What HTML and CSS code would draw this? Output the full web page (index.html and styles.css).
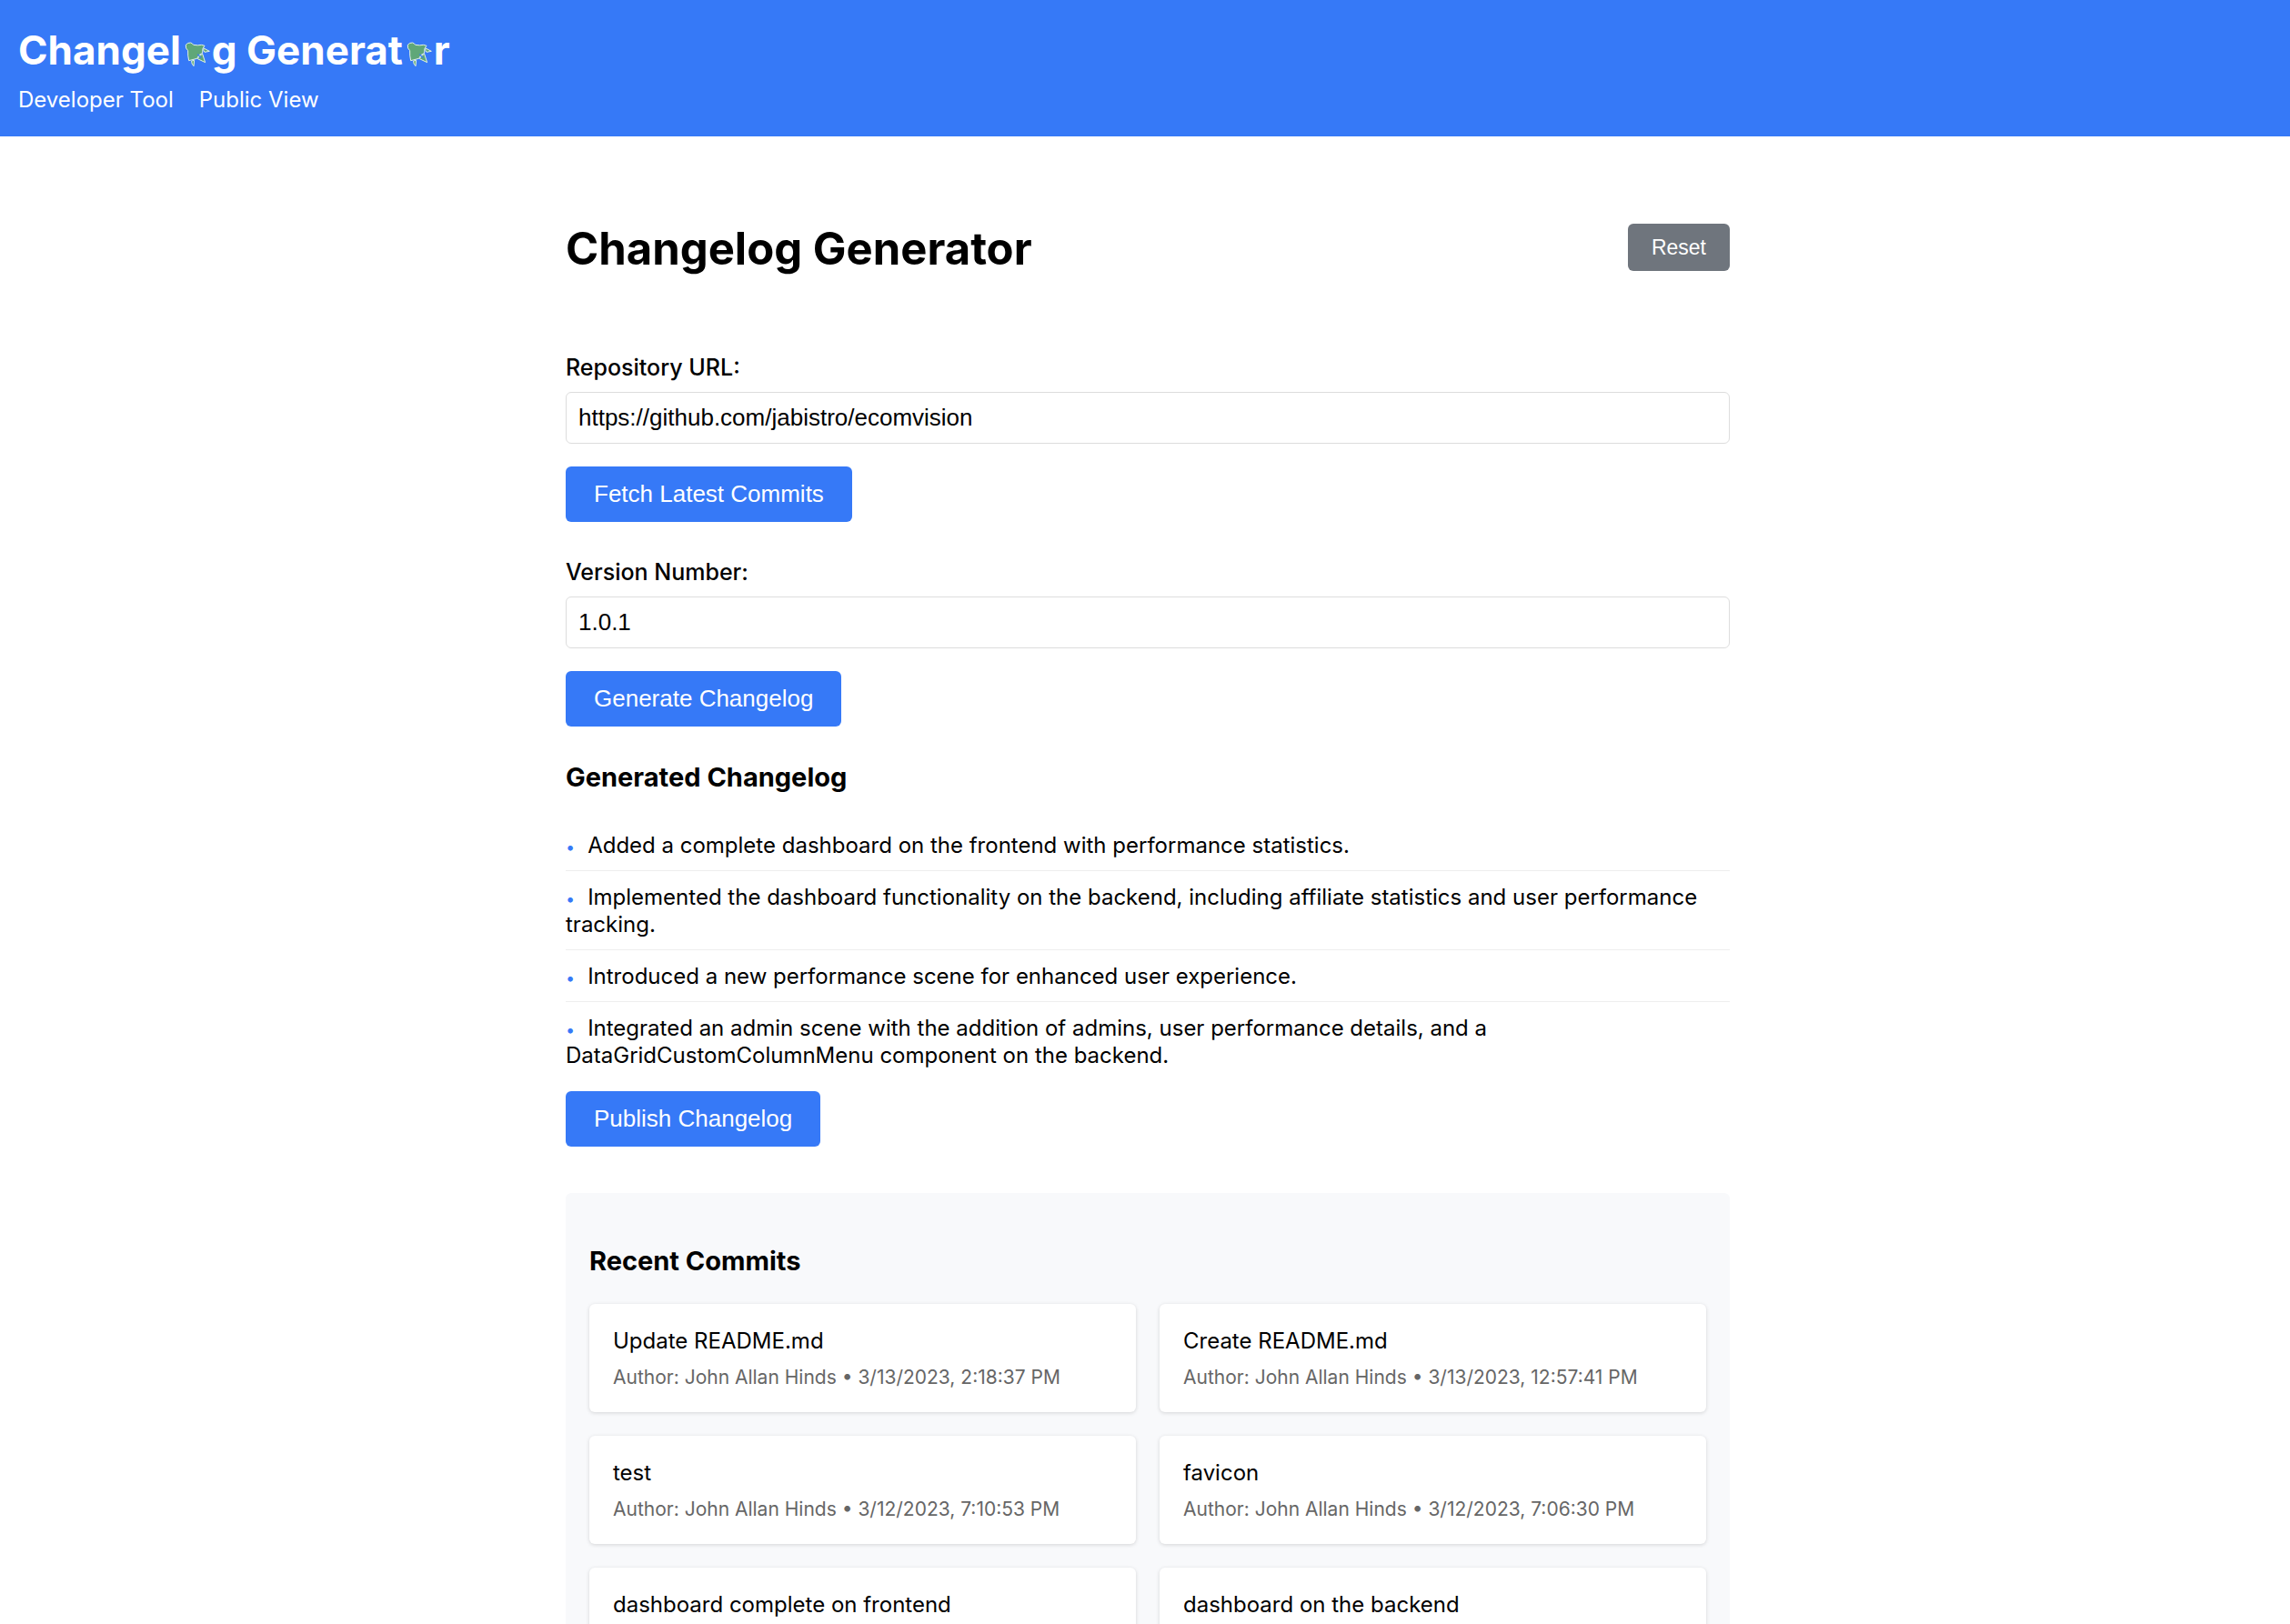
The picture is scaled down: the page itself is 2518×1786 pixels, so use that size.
FILE: index.html
```html
<!DOCTYPE html>
<html lang="en">
<head>
<meta charset="utf-8">
<meta name="viewport" content="width=device-width, initial-scale=1">
<title>Changelog Generator</title>
<link rel="stylesheet" href="styles.css">
</head>
<body>
<svg class="sprite" aria-hidden="true">
  <symbol id="rocket" viewBox="0 0 84 84">
    <g fill="#5fa778" stroke="#e3f2e4" stroke-width="3" stroke-linejoin="round">
      <path d="M4 10Q10 2 20 3Q26 5 29 10Q44 13 56 10L66 13Q57 20 59 37Q46 41 41 55L14 62Q10 46 11 29Q2 22 4 10Z"/>
      <path d="M63 21L82 31L66 34Q60 28 63 21Z"/>
      <path d="M54 43L59 40L68 68L43 56Q48 46 54 43Z"/>
      <path d="M23 63L32 61L30 80Q22 73 23 63Z"/>
    </g>
    <path d="M43 41L54 53" fill="none" stroke="#3679f7" stroke-width="4"/>
  </symbol>
</svg>

<header class="site-header">
  <div class="brand">Changel<svg class="rocket" role="img" aria-label="o"><use href="#rocket"/></svg>g Generat<svg class="rocket" role="img" aria-label="o"><use href="#rocket"/></svg>r</div>
  <nav class="nav">
    <a href="#developer">Developer Tool</a>
    <a href="#public">Public View</a>
  </nav>
</header>

<main class="container">
  <div class="page-head">
    <h1>Changelog Generator</h1>
    <button type="button" class="btn btn-reset">Reset</button>
  </div>

  <form class="form">
    <div class="field">
      <label for="repo">Repository URL:</label>
      <input id="repo" type="text" value="https://github.com/jabistro/ecomvision">
      <button type="button" class="btn">Fetch Latest Commits</button>
    </div>
    <div class="field">
      <label for="version">Version Number:</label>
      <input id="version" type="text" value="1.0.1">
      <button type="button" class="btn">Generate Changelog</button>
    </div>
  </form>

  <section class="changelog">
    <h2>Generated Changelog</h2>
    <ul class="entries">
      <li>Added a complete dashboard on the frontend with performance statistics.</li>
      <li>Implemented the dashboard functionality on the backend, including affiliate statistics and user performance tracking.</li>
      <li>Introduced a new performance scene for enhanced user experience.</li>
      <li>Integrated an admin scene with the addition of admins, user performance details, and a DataGridCustomColumnMenu component on the backend.</li>
    </ul>
    <button type="button" class="btn">Publish Changelog</button>
  </section>

  <section class="commits">
    <h2>Recent Commits</h2>
    <div class="commit-grid">
      <article class="commit">
        <p class="commit-title">Update README.md</p>
        <p class="commit-meta">Author: John Allan Hinds • 3/13/2023, 2:18:37 PM</p>
      </article>
      <article class="commit">
        <p class="commit-title">Create README.md</p>
        <p class="commit-meta">Author: John Allan Hinds • 3/13/2023, 12:57:41 PM</p>
      </article>
      <article class="commit">
        <p class="commit-title">test</p>
        <p class="commit-meta">Author: John Allan Hinds • 3/12/2023, 7:10:53 PM</p>
      </article>
      <article class="commit">
        <p class="commit-title">favicon</p>
        <p class="commit-meta">Author: John Allan Hinds • 3/12/2023, 7:06:30 PM</p>
      </article>
      <article class="commit">
        <p class="commit-title">dashboard complete on frontend</p>
      </article>
      <article class="commit">
        <p class="commit-title">dashboard on the backend</p>
      </article>
    </div>
  </section>
</main>
</body>
</html>
```
FILE: styles.css
```css
* {
  box-sizing: border-box;
}

html {
  scrollbar-width: none;
}

body {
  margin: 0;
  background: #fff;
  color: #000;
  font-family: Inter, "Liberation Sans", sans-serif;
  font-size: 24px;
  line-height: 30px;
}

h1,
h2,
p,
ul {
  margin: 0;
  padding: 0;
}

.sprite {
  display: none;
}

.site-header {
  display: flex;
  flex-direction: column;
  gap: 12px;
  padding: 27px 20px 25px;
  background: #3679f7;
  color: #fff;
}

.brand {
  font-size: 44px;
  font-weight: 700;
  line-height: 56px;
}

.rocket {
  width: 28px;
  height: 28px;
  margin: 0 2px 0 4px;
  vertical-align: -3px;
}

.nav {
  display: flex;
  gap: 28px;
}

.nav a {
  color: inherit;
  text-decoration: none;
}

.container {
  max-width: 1286px;
  margin: 0 auto;
  padding: 93px 0 0 6px;
}

.page-head {
  display: flex;
  justify-content: space-between;
  align-items: flex-start;
  margin-bottom: 84px;
}

h1 {
  font-size: 49px;
  font-weight: 700;
  line-height: 62px;
}

h2 {
  font-size: 29px;
  font-weight: 700;
  line-height: 36px;
}

.form {
  display: flex;
  flex-direction: column;
  gap: 40px;
}

.field {
  display: flex;
  flex-direction: column;
  align-items: flex-start;
}

label {
  margin-bottom: 12px;
  font-size: 25px;
  font-weight: 500;
}

input {
  width: 100%;
  height: 57px;
  margin-bottom: 25px;
  padding: 0 13px;
  border: 1px solid #ddd;
  border-radius: 6px;
  background: #fff;
  color: #000;
  font: 26px "Liberation Sans", Arial, sans-serif;
}

.btn {
  height: 61px;
  padding: 0 31px;
  border: 0;
  border-radius: 6px;
  background: #3679f7;
  color: #fff;
  font: 26px "Liberation Sans", Arial, sans-serif;
}

.btn-reset {
  height: 52px;
  margin-top: 3px;
  padding: 0 26px;
  background: #6f757d;
  font-size: 23px;
}

.changelog {
  margin: 38px 0 51px;
}

.entries {
  margin: 28px 0 12px;
  list-style: none;
}

.entries li {
  padding: 14px 0 12px;
  border-bottom: 1px solid #eee;
}

.entries li:last-child {
  border-bottom: 0;
}

.entries li::before {
  content: "•";
  margin-right: 14px;
  color: #3679f7;
  font-size: 18px;
  line-height: 1;
}

.commits {
  padding: 57px 26px 26px;
  border-radius: 6px;
  background: #f8f9fb;
}

.commit-grid {
  display: grid;
  grid-template-columns: 1fr 1fr;
  gap: 26px;
  margin-top: 29px;
}

.commit {
  min-height: 119px;
  padding: 27px 26px 25px;
  border-radius: 6px;
  background: #fff;
  box-shadow: 0 1px 4px rgba(0, 0, 0, 0.15);
}

.commit-title {
  margin-bottom: 13px;
  line-height: 28px;
}

.commit-meta {
  color: #666;
  font-size: 21px;
  line-height: 26px;
}
```
